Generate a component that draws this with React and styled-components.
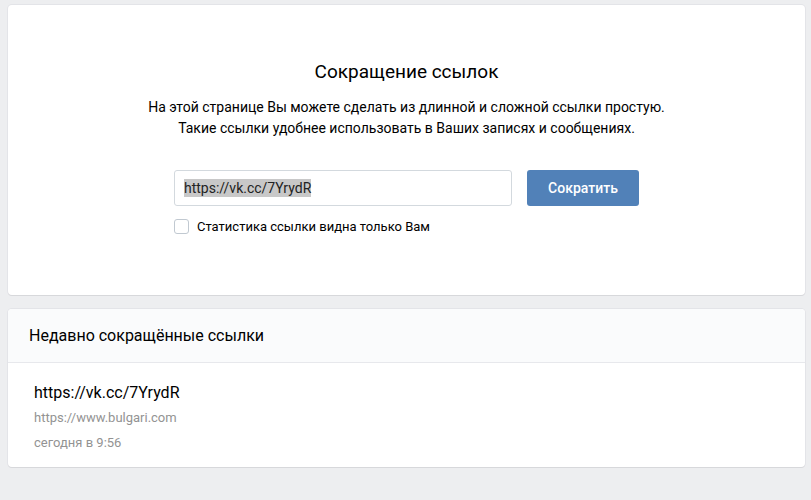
import React from "react";
import styled, { createGlobalStyle } from "styled-components";

const Global = createGlobalStyle`
  html, body { margin: 0; padding: 0; background: #edeef0; }
  body { font-family: Roboto, "Open Sans", "Liberation Sans", sans-serif; color: #000; -webkit-font-smoothing: antialiased; }
`;

const Page = styled.div`
  padding: 5px 6px 20px 8px;
  display: flex;
  flex-direction: column;
  gap: 14px;
`;

const Card = styled.div`
  background: #fff;
  border-radius: 4px;
  box-shadow: 0 1px 0 0 #d7d8db, 0 0 0 1px #e3e4e8;
  overflow: hidden;
`;

const Intro = styled.div`
  height: 290px;
  box-sizing: border-box;
  padding-top: 55px;
  display: flex;
  flex-direction: column;
  align-items: center;
`;

const Title = styled.h1`
  margin: 0;
  font-size: 19px;
  line-height: 24px;
  font-weight: 400;
  color: #000;
`;

const Desc = styled.p`
  margin: 13px 0 0;
  font-size: 14px;
  line-height: 21px;
  text-align: center;
  color: #000;
`;

const Form = styled.div`
  margin-top: 31px;
  width: 465px;
  display: flex;
  flex-direction: column;
  gap: 13px;
`;

const Row = styled.div`
  display: flex;
  gap: 15px;
`;

const Field = styled.div`
  width: 338px;
  height: 36px;
  box-sizing: border-box;
  border: 1px solid #d3d9de;
  border-radius: 3px;
  padding: 0 9px;
  display: flex;
  align-items: center;
  font-size: 14px;
  color: #222;
`;

const Selected = styled.span`
  background: #c8c8c8;
  line-height: 18px;
`;

const Button = styled.button`
  width: 112px;
  height: 36px;
  border: none;
  border-radius: 3px;
  background: #5181b8;
  color: #fff;
  font-family: inherit;
  font-size: 14px;
  font-weight: 500;
  cursor: pointer;
`;

const CheckRow = styled.label`
  display: flex;
  align-items: center;
  gap: 8px;
  font-size: 13px;
  color: #000;
`;

const Box = styled.span`
  width: 15px;
  height: 15px;
  box-sizing: border-box;
  border: 1px solid #c1c9d1;
  border-radius: 3px;
  background: #fff;
`;

const Header = styled.div`
  height: 54px;
  box-sizing: border-box;
  background: #fafbfc;
  border-bottom: 1px solid #e7e8ec;
  display: flex;
  align-items: center;
  padding-left: 21px;
  font-size: 16px;
  color: #000;
`;

const Item = styled.div`
  height: 104px;
  box-sizing: border-box;
  padding: 19px 26px 0;
  display: flex;
  flex-direction: column;
`;

const Short = styled.div`
  font-size: 16px;
  line-height: 22px;
  color: #000;
`;

const Meta = styled.div`
  font-size: ${(p) => p.$size}px;
  line-height: 18px;
  color: #939393;
  margin-top: ${(p) => p.$mt}px;
`;

export default function App() {
  return (
    <>
      <Global />
      <Page>
        <Card>
          <Intro>
            <Title>Сокращение ссылок</Title>
            <Desc>
              На этой странице Вы можете сделать из длинной и сложной ссылки простую.
              <br />
              Такие ссылки удобнее использовать в Ваших записях и сообщениях.
            </Desc>
            <Form>
              <Row>
                <Field>
                  <Selected>https://vk.cc/7YrydR</Selected>
                </Field>
                <Button>Сократить</Button>
              </Row>
              <CheckRow>
                <Box />
                Статистика ссылки видна только Вам
              </CheckRow>
            </Form>
          </Intro>
        </Card>
        <Card>
          <Header>Недавно сокращённые ссылки</Header>
          <Item>
            <Short>https://vk.cc/7YrydR</Short>
            <Meta $size={13} $mt={5}>https://www.bulgari.com</Meta>
            <Meta $size={13} $mt={7}>сегодня в 9:56</Meta>
          </Item>
        </Card>
      </Page>
    </>
  );
}
